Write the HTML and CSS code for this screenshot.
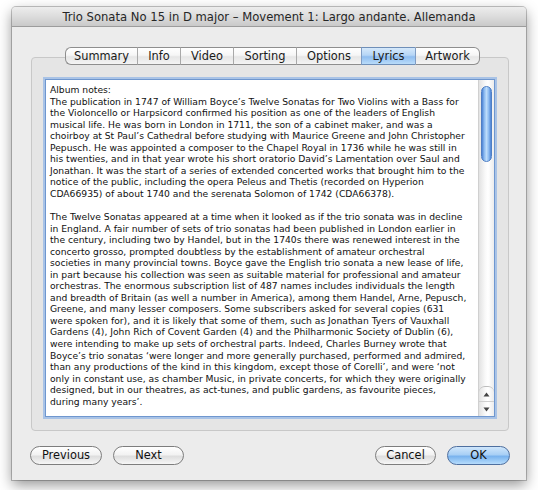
FILE: index.html
```html
<!DOCTYPE html>
<html>
<head>
<meta charset="utf-8">
<link rel="stylesheet" href="styles.css">
</head>
<body>
<div class="window">
  <div class="titlebar">Trio Sonata No 15 in D major – Movement 1: Largo andante. Allemanda</div>
  <div class="content">
    <div class="tabs">
      <div class="tab first" style="width:72px">Summary</div>
      <div class="tab" style="width:43px">Info</div>
      <div class="tab" style="width:53px">Video</div>
      <div class="tab" style="width:63px">Sorting</div>
      <div class="tab" style="width:65px">Options</div>
      <div class="tab selected" style="width:54px">Lyrics</div>
      <div class="tab last" style="width:65px">Artwork</div>
    </div>
    <div class="group">
      <div class="textarea">
        <div class="notes">Album notes:
The publication in 1747 of William Boyce’s Twelve Sonatas for Two Violins with a Bass for
the Violoncello or Harpsicord confirmed his position as one of the leaders of English
musical life. He was born in London in 1711, the son of a cabinet maker, and was a
choirboy at St Paul’s Cathedral before studying with Maurice Greene and John Christopher
Pepusch. He was appointed a composer to the Chapel Royal in 1736 while he was still in
his twenties, and in that year wrote his short oratorio David’s Lamentation over Saul and
Jonathan. It was the start of a series of extended concerted works that brought him to the
notice of the public, including the opera Peleus and Thetis (recorded on Hyperion
CDA66935) of about 1740 and the serenata Solomon of 1742 (CDA66378).

The Twelve Sonatas appeared at a time when it looked as if the trio sonata was in decline
in England. A fair number of sets of trio sonatas had been published in London earlier in
the century, including two by Handel, but in the 1740s there was renewed interest in the
concerto grosso, prompted doubtless by the establishment of amateur orchestral
societies in many provincial towns. Boyce gave the English trio sonata a new lease of life,
in part because his collection was seen as suitable material for professional and amateur
orchestras. The enormous subscription list of 487 names includes individuals the length
and breadth of Britain (as well a number in America), among them Handel, Arne, Pepusch,
Greene, and many lesser composers. Some subscribers asked for several copies (631
were spoken for), and it is likely that some of them, such as Jonathan Tyers of Vauxhall
Gardens (4), John Rich of Covent Garden (4) and the Philharmonic Society of Dublin (6),
were intending to make up sets of orchestral parts. Indeed, Charles Burney wrote that
Boyce’s trio sonatas ‘were longer and more generally purchased, performed and admired,
than any productions of the kind in this kingdom, except those of Corelli’, and were ‘not
only in constant use, as chamber Music, in private concerts, for which they were originally
designed, but in our theatres, as act-tunes, and public gardens, as favourite pieces,
during many years’.</div>
        <div class="scrollbar">
          <div class="track">
            <div class="thumb"></div>
          </div>
          <div class="arrow up"><svg width="7" height="5" viewBox="0 0 7 5"><path d="M3.5 0.5 L6.5 4.5 L0.5 4.5 Z" fill="#444"/></svg></div>
          <div class="arrow down"><svg width="7" height="5" viewBox="0 0 7 5"><path d="M0.5 0.5 L6.5 0.5 L3.5 4.5 Z" fill="#444"/></svg></div>
        </div>
      </div>
    </div>
    <div class="buttons">
      <div class="btn" style="width:72px">Previous</div>
      <div class="btn" style="width:71px">Next</div>
      <div class="spacer"></div>
      <div class="btn" style="width:61px">Cancel</div>
      <div class="btn default" style="width:63px">OK</div>
    </div>
  </div>
</div>
</body>
</html>
```

FILE: styles.css
```css
html, body {
  margin: 0;
  padding: 0;
  background: #ffffff;
  width: 538px;
  height: 490px;
  overflow: hidden;
  font-family: "DejaVu Sans", "Lucida Grande", sans-serif;
}

.window {
  margin: 7px 0 0 12px;
  width: 514px;
  height: 473px;
  background: #ececec;
  border-radius: 4px 4px 0 0;
  box-shadow: 0 0 0 1px rgba(0,0,0,0.22), 0 5px 14px rgba(0,0,0,0.42);
  display: flex;
  flex-direction: column;
}

.titlebar {
  height: 19px;
  border-bottom: 1px solid #9c9c9c;
  border-radius: 4px 4px 0 0;
  background: linear-gradient(to bottom, #ededed 0%, #dcdcdc 50%, #c9c9c9 100%);
  text-align: center;
  font-size: 11.6px;
  line-height: 21px;
  color: #262626;
  white-space: nowrap;
}

.content {
  flex: 1;
  padding: 20px 17px 0 19px;
  display: flex;
  flex-direction: column;
}

.tabs {
  display: flex;
  margin-left: 34px;
  height: 18px;
  position: relative;
  z-index: 2;
}

.tab {
  box-sizing: border-box;
  height: 18px;
  border-top: 1px solid #8e8e8e;
  border-bottom: 1px solid #8e8e8e;
  border-left: 1px solid #a9a9a9;
  background: linear-gradient(to bottom, #ffffff 0%, #f6f6f6 45%, #e6e6e6 55%, #f4f4f4 100%);
  font-size: 11.4px;
  line-height: 16px;
  color: #1a1a1a;
  text-align: center;
  white-space: nowrap;
}

.tab.first {
  border-left: 1px solid #8e8e8e;
  border-radius: 6px 0 0 6px;
}

.tab.last {
  border-right: 1px solid #8e8e8e;
  border-radius: 0 6px 6px 0;
}

.tab.selected {
  background: linear-gradient(to bottom, #d6e9fb 0%, #b5d5f6 45%, #8fbdf0 55%, #b9dcfa 100%);
  border-top-color: #6f8fb8;
  border-bottom-color: #6f8fb8;
  border-left-color: #7f9cc4;
}

.tab.selected + .tab {
  border-left-color: #7f9cc4;
}

.group {
  margin-top: -8px;
  height: 374px;
  box-sizing: border-box;
  border: 1px solid #c8c8c8;
  border-radius: 4px;
  background: #e5e5e5;
  padding: 21px 13px 13px 13px;
}

.textarea {
  height: 338px;
  box-sizing: border-box;
  background: #ffffff;
  border: 1px solid #6f97cf;
  box-shadow: 0 0 0 2px rgba(128,172,230,0.6);
  display: flex;
}

.notes {
  flex: 1;
  padding: 4px 0 0 4px;
  font-size: 9.2px;
  line-height: 11.55px;
  color: #111;
  white-space: pre;
  overflow: hidden;
}

.scrollbar {
  width: 15px;
  display: flex;
  flex-direction: column;
  border-left: 1px solid #d0d0d0;
  background: linear-gradient(to right, #e2e2e2, #f8f8f8 40%, #ffffff 60%, #ececec);
}

.track {
  flex: 1;
  padding: 6px 2px 0 2px;
}

.thumb {
  height: 74px;
  border-radius: 6px;
  border: 1px solid #4f7fc4;
  background: linear-gradient(to right, #4c82d4 0%, #8bbaf0 25%, #bcdcfb 50%, #8bbaf0 75%, #4c82d4 100%);
}

.arrow {
  height: 14px;
  border-top: 1px solid #cfcfcf;
  display: flex;
  align-items: center;
  justify-content: center;
}

.arrow.up {
  border-top: 1px solid #bdbdbd;
  border-radius: 6px 6px 0 0;
}

.buttons {
  display: flex;
  gap: 11px;
  margin: 15px -1px 0 -1px;
  height: 18px;
}

.spacer {
  flex: 1;
}

.btn {
  box-sizing: border-box;
  height: 19px;
  border: 1px solid #7d7d7d;
  border-radius: 10px;
  background: linear-gradient(to bottom, #ffffff 0%, #f2f2f2 45%, #dedede 55%, #f6f6f6 100%);
  font-size: 11.4px;
  line-height: 17px;
  text-align: center;
  color: #111;
  white-space: nowrap;
}

.btn.default {
  border-color: #4e6f9f;
  background: linear-gradient(to bottom, #cfe6fb 0%, #a8cff5 45%, #79b3ee 55%, #b6dcfc 100%);
}
```
